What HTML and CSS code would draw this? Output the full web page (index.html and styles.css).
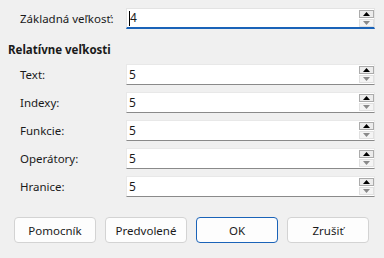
FILE: index.html
```html
<!DOCTYPE html>
<html lang="sk">
<head>
<meta charset="utf-8">
<title>Veľkosti</title>
<link rel="stylesheet" href="styles.css">
</head>
<body>
<div class="dialog">
  <div class="row first">
    <span class="label">Základná veľkosť:</span>
    <div class="spin focused">
      <span class="value"><span class="caret"></span>4</span>
      <div class="arrows">
        <span class="arrow up"><svg width="7" height="4" viewBox="0 0 7 4"><path d="M0 4 L3.5 0 L7 4 Z" fill="#000"/></svg></span>
        <span class="arrow down"><svg width="7" height="4" viewBox="0 0 7 4"><path d="M0 0 L7 0 L3.5 4 Z" fill="#8a8a8a"/></svg></span>
      </div>
    </div>
  </div>
  <div class="heading">Relatívne veľkosti</div>
  <div class="rows">
    <div class="row">
      <span class="label">Text:</span>
      <div class="spin">
        <span class="value">5</span>
        <div class="arrows">
          <span class="arrow up"><svg width="7" height="4" viewBox="0 0 7 4"><path d="M0 4 L3.5 0 L7 4 Z" fill="#000"/></svg></span>
          <span class="arrow down"><svg width="7" height="4" viewBox="0 0 7 4"><path d="M0 0 L7 0 L3.5 4 Z" fill="#8a8a8a"/></svg></span>
        </div>
      </div>
    </div>
    <div class="row">
      <span class="label">Indexy:</span>
      <div class="spin">
        <span class="value">5</span>
        <div class="arrows">
          <span class="arrow up"><svg width="7" height="4" viewBox="0 0 7 4"><path d="M0 4 L3.5 0 L7 4 Z" fill="#000"/></svg></span>
          <span class="arrow down"><svg width="7" height="4" viewBox="0 0 7 4"><path d="M0 0 L7 0 L3.5 4 Z" fill="#8a8a8a"/></svg></span>
        </div>
      </div>
    </div>
    <div class="row">
      <span class="label">Funkcie:</span>
      <div class="spin">
        <span class="value">5</span>
        <div class="arrows">
          <span class="arrow up"><svg width="7" height="4" viewBox="0 0 7 4"><path d="M0 4 L3.5 0 L7 4 Z" fill="#000"/></svg></span>
          <span class="arrow down"><svg width="7" height="4" viewBox="0 0 7 4"><path d="M0 0 L7 0 L3.5 4 Z" fill="#8a8a8a"/></svg></span>
        </div>
      </div>
    </div>
    <div class="row">
      <span class="label">Operátory:</span>
      <div class="spin">
        <span class="value">5</span>
        <div class="arrows">
          <span class="arrow up"><svg width="7" height="4" viewBox="0 0 7 4"><path d="M0 4 L3.5 0 L7 4 Z" fill="#000"/></svg></span>
          <span class="arrow down"><svg width="7" height="4" viewBox="0 0 7 4"><path d="M0 0 L7 0 L3.5 4 Z" fill="#8a8a8a"/></svg></span>
        </div>
      </div>
    </div>
    <div class="row">
      <span class="label">Hranice:</span>
      <div class="spin">
        <span class="value">5</span>
        <div class="arrows">
          <span class="arrow up"><svg width="7" height="4" viewBox="0 0 7 4"><path d="M0 4 L3.5 0 L7 4 Z" fill="#000"/></svg></span>
          <span class="arrow down"><svg width="7" height="4" viewBox="0 0 7 4"><path d="M0 0 L7 0 L3.5 4 Z" fill="#8a8a8a"/></svg></span>
        </div>
      </div>
    </div>
  </div>
  <div class="buttons">
    <button class="btn">Pomocník</button>
    <button class="btn">Predvolené</button>
    <button class="btn default">OK</button>
    <button class="btn">Zrušiť</button>
  </div>
</div>
</body>
</html>
```
FILE: styles.css
```css
html, body {
  margin: 0;
  padding: 0;
  background: #f0f0f0;
}
body {
  width: 384px;
  height: 258px;
  overflow: hidden;
  font-family: "Noto Sans", "Open Sans", sans-serif;
  font-size: 11.5px;
  color: #1a1a1a;
}
.dialog {
  padding: 8px 9px 0 8px;
}
.row {
  display: flex;
  align-items: stretch;
  height: 21px;
  padding-left: 12px;
}
.label {
  width: 106px;
  display: flex;
  align-items: center;
  white-space: nowrap;
}
.spin {
  width: 249px;
  box-sizing: border-box;
  background: #fff;
  border: 1px solid #e8e8e8;
  border-bottom: 1px solid #8a8a8a;
  display: flex;
  align-items: center;
}
.spin.focused {
  border-color: #e3e3e3;
  border-bottom: 2px solid #1a63b8;
}
.value {
  flex: 1;
  padding-left: 2px;
  display: flex;
  align-items: center;
  line-height: 16px;
  font-size: 12px;
}
.caret {
  width: 1px;
  height: 15px;
  background: #000;
}
.arrows {
  display: flex;
  flex-direction: column;
  width: 15px;
}
.arrow {
  box-sizing: border-box;
  height: 8px;
  display: flex;
  align-items: center;
  justify-content: center;
}
.arrow svg {
  display: block;
}
.arrow.up {
  border: 1px solid #ababab;
  background: #ececec;
}
.arrow.down {
  border: 1px solid #e0e0e0;
  background: #f4f4f4;
  margin-top: 1px;
}
.heading {
  font-weight: bold;
  line-height: 16px;
  margin-top: 13px;
  margin-bottom: 6px;
}
.rows {
  display: flex;
  flex-direction: column;
  gap: 7px;
}
.buttons {
  display: flex;
  gap: 9px;
  margin-top: 20px;
  padding-left: 6px;
}
.btn {
  width: 82px;
  height: 26px;
  box-sizing: border-box;
  border: 1px solid #d3d3d3;
  border-radius: 4px;
  background: #fdfdfd;
  font-family: "Noto Sans", "Open Sans", sans-serif;
  font-size: 11.5px;
  color: #1a1a1a;
  padding: 0;
}
.btn.default {
  border: 1px solid #1a63b8;
}
```
